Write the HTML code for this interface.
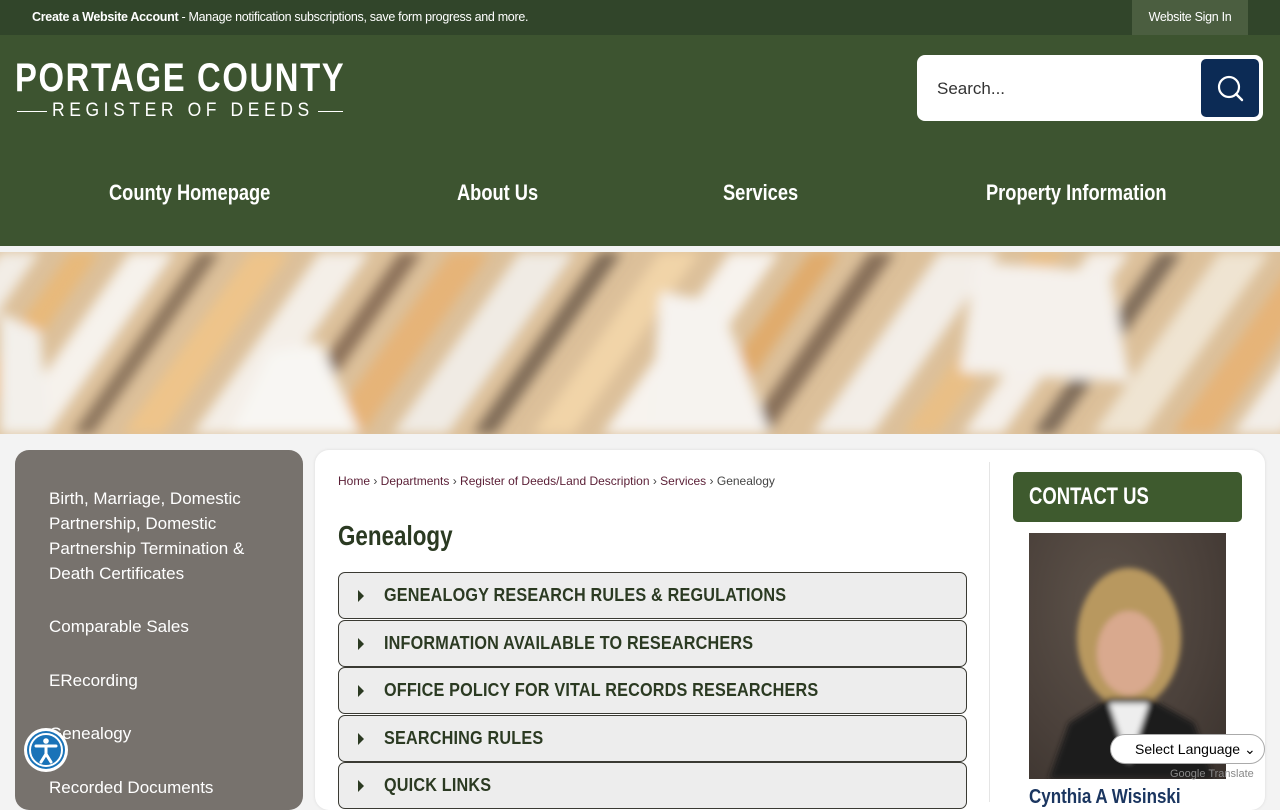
<!DOCTYPE html>
<html><head><meta charset="utf-8"><style>
*{margin:0;padding:0;box-sizing:border-box}
body{width:1280px;height:800px;overflow:hidden;background:#f3f3f3;font-family:"Liberation Sans",sans-serif;position:relative}
.top{position:absolute;left:0;top:0;width:1280px;height:35px;background:#31452a;box-shadow:0 2px 4px rgba(0,0,0,.3)}
.top .t{position:absolute;left:32px;top:10px;font-size:12.5px;color:#fff;letter-spacing:-.3px}
.top .si{position:absolute;left:1132px;top:0;width:116px;height:35px;background:#4b5e40;color:#fff;font-size:12.5px;text-align:center;line-height:35px;letter-spacing:-.3px}
.hdr{position:absolute;left:0;top:35px;width:1280px;height:211px;background:#3d5430}
.logo1{position:absolute;left:15px;top:56px;font-size:40px;font-weight:bold;color:#fff;letter-spacing:2px;transform:scaleX(.82);transform-origin:0 0;white-space:nowrap}
.logo2{position:absolute;left:52px;top:100px;font-size:19px;color:#fff;letter-spacing:5px;transform:scaleX(.92);transform-origin:0 0;white-space:nowrap}
.ln{position:absolute;top:111px;height:1px;background:#fff}
.search{position:absolute;left:917px;top:55px;width:346px;height:66px;background:#fff;border-radius:8px}
.search span{position:absolute;left:20px;top:24px;font-size:17px;color:#333}
.sb{position:absolute;left:284px;top:4px;width:58px;height:58px;background:#0c2b55;border-radius:5px}
.nav a{position:absolute;top:180px;color:#fff;font-size:22px;font-weight:bold;text-decoration:none;white-space:nowrap;transform:scaleX(.83);transform-origin:0 0}
.ban{position:absolute;left:0;top:252px;width:1280px;height:182px;overflow:hidden;background:#d9b98c}
.side{position:absolute;left:15px;top:450px;width:288px;height:360px;background:#77726d;border-radius:14px}
.side div{position:absolute;left:34px;color:#fff;font-size:17px;line-height:25px}
.main{position:absolute;left:315px;top:450px;width:950px;height:360px;background:#fff;border-radius:14px;box-shadow:0 0 3px rgba(0,0,0,.1)}
.bc{position:absolute;left:23px;top:24px;font-size:12px;color:#5a1e35}
.bc i{font-style:normal;color:#444}
h1{position:absolute;left:23px;top:70px;font-size:28px;color:#2b3a22;transform:scaleX(.8);transform-origin:0 0}
.acc{position:absolute;left:23px;width:629px;height:47px;background:#ededed;border:1.5px solid #3a3a33;border-radius:7px}
.acc b{position:absolute;left:45px;top:12px;font-size:18px;color:#2b3a22;letter-spacing:.2px;transform:scaleX(.9);transform-origin:0 0;white-space:nowrap}
.acc s{position:absolute;left:19px;top:17px;width:0;height:0;border-left:6px solid #2b3a22;border-top:6px solid transparent;border-bottom:6px solid transparent}
.vl{position:absolute;left:674px;top:12px;width:1px;height:340px;background:#e5e5e5}
.cu{position:absolute;left:698px;top:22px;width:229px;height:50px;background:#3e5a2e;border-radius:5px}
.cu span{position:absolute;left:16px;top:11px;color:#fff;font-size:24px;font-weight:bold;transform:scaleX(.77);transform-origin:0 0;white-space:nowrap}
.photo{position:absolute;left:714px;top:83px;width:197px;height:246px;background:radial-gradient(ellipse at 40% 30%,#5e534a 0,#4a403a 60%,#3a322d 100%);overflow:hidden}
.name{position:absolute;left:714px;top:336px;font-size:20px;font-weight:bold;color:#1b3660;transform:scaleX(.85);transform-origin:0 0;white-space:nowrap}
</style></head><body>
<div class="top"><div class="t"><b>Create a Website Account</b> - Manage notification subscriptions, save form progress and more.</div><div class="si">Website Sign In</div></div>
<div class="hdr"></div>
<div class="logo1">PORTAGE COUNTY</div>
<div class="ln" style="left:17px;width:30px"></div>
<div class="logo2">REGISTER OF DEEDS</div>
<div class="ln" style="left:318px;width:25px"></div>
<div class="search"><span>Search...</span><div class="sb"><svg width="58" height="58" viewBox="0 0 58 58"><circle cx="28" cy="28" r="10" fill="none" stroke="#fff" stroke-width="2.2"/><line x1="35" y1="35" x2="41" y2="41" stroke="#fff" stroke-width="2.4" stroke-linecap="round"/></svg></div></div>
<div class="nav"><a style="left:109px">County Homepage</a><a style="left:457px">About Us</a><a style="left:723px">Services</a><a style="left:986px">Property Information</a></div>
<div class="ban"><svg width="1280" height="182"><defs><filter id="f"><feGaussianBlur stdDeviation="6"/></filter></defs><rect width="1280" height="182" fill="#dcc09a"/><g filter="url(#f)">
<g transform="skewX(-35)">
<rect x="0" y="0" width="40" height="182" fill="#f2ede6"/><rect x="70" y="0" width="30" height="182" fill="#e8b97a"/><rect x="130" y="0" width="45" height="182" fill="#f6f2ec"/><rect x="200" y="0" width="20" height="182" fill="#8a735c"/><rect x="250" y="0" width="40" height="182" fill="#eec48a"/><rect x="320" y="0" width="50" height="182" fill="#f4efe8"/><rect x="400" y="0" width="22" height="182" fill="#8a7058"/><rect x="450" y="0" width="40" height="182" fill="#e6b478"/><rect x="520" y="0" width="55" height="182" fill="#f0ebe4"/><rect x="600" y="0" width="22" height="182" fill="#7e6a56"/><rect x="660" y="0" width="40" height="182" fill="#f1d4a8"/><rect x="730" y="0" width="50" height="182" fill="#f7f3ee"/><rect x="810" y="0" width="30" height="182" fill="#e0ab6c"/><rect x="870" y="0" width="25" height="182" fill="#866e58"/><rect x="940" y="0" width="60" height="182" fill="#f3eee8"/><rect x="1030" y="0" width="35" height="182" fill="#e9bf86"/><rect x="1090" y="0" width="40" height="182" fill="#f5f0ea"/><rect x="1160" y="0" width="22" height="182" fill="#7d6a58"/><rect x="1220" y="0" width="50" height="182" fill="#efe4d2"/><rect x="1300" y="0" width="40" height="182" fill="#e6b478"/><rect x="1360" y="0" width="50" height="182" fill="#f3eee8"/></g>
<path d="M230 182 L270 100 L320 90 L360 182Z" fill="#f8f6f3"/><path d="M650 182 L660 40 L720 50 L770 182Z" fill="#f6f3ef"/><path d="M960 120 L975 10 L1110 20 L1130 130Z" fill="#f5f1ec"/><path d="M0 182 L0 60 L40 80 L50 182Z" fill="#f3f0eb"/></g></svg></div>
<div class="side"><div style="top:36px">Birth, Marriage, Domestic<br>Partnership, Domestic<br>Partnership Termination &amp;<br>Death Certificates</div><div style="top:164px">Comparable Sales</div><div style="top:218px">ERecording</div><div style="top:271px">Genealogy</div><div style="top:325px">Recorded Documents</div></div>
<div class="main">
<div class="bc">Home <i>›</i> Departments <i>›</i> Register of Deeds/Land Description <i>›</i> Services <i>›</i> <i>Genealogy</i></div>
<h1>Genealogy</h1>
<div class="acc" style="top:122px"><s></s><b>GENEALOGY RESEARCH RULES &amp; REGULATIONS</b></div>
<div class="acc" style="top:170px"><s></s><b>INFORMATION AVAILABLE TO RESEARCHERS</b></div>
<div class="acc" style="top:217px"><s></s><b>OFFICE POLICY FOR VITAL RECORDS RESEARCHERS</b></div>
<div class="acc" style="top:265px"><s></s><b>SEARCHING RULES</b></div>
<div class="acc" style="top:312px"><s></s><b>QUICK LINKS</b></div>
<div class="vl"></div>
<div class="cu"><span>CONTACT US</span></div>
<div class="photo"><svg width="197" height="246"><defs><filter id="g"><feGaussianBlur stdDeviation="3"/></filter></defs><g filter="url(#g)"><ellipse cx="100" cy="105" rx="52" ry="70" fill="#b8985f"/><path d="M20 246 L40 190 L80 165 L120 165 L165 190 L185 246Z" fill="#1c1a1c"/><path d="M80 170 L100 230 L120 170Z" fill="#eeeeee"/><ellipse cx="100" cy="120" rx="32" ry="42" fill="#d9a98e"/></g></svg></div>
<div class="name">Cynthia A Wisinski</div>
</div>
<div style="position:absolute;left:1110px;top:734px;width:155px;height:30px;background:#fff;border:1px solid #aaa;border-radius:15px;font-size:14px;padding:6px 0 0 24px">Select Language ⌄</div>
<div style="position:absolute;left:1170px;top:768px;font-size:11px;color:#888">Google Translate</div>
<svg style="position:absolute;left:23px;top:727px" width="46" height="46" viewBox="0 0 46 46"><circle cx="23" cy="23" r="22" fill="#fff"/><circle cx="23" cy="23" r="19" fill="#1a73b8"/><circle cx="23" cy="23" r="16" fill="none" stroke="#fff" stroke-width="2"/><circle cx="23" cy="14" r="2.8" fill="#fff"/><path d="M13 19 L33 19 M23 19 L23 27 M23 27 L18 35 M23 27 L28 35" stroke="#fff" stroke-width="3" stroke-linecap="round" fill="none"/></svg>
</body></html>
